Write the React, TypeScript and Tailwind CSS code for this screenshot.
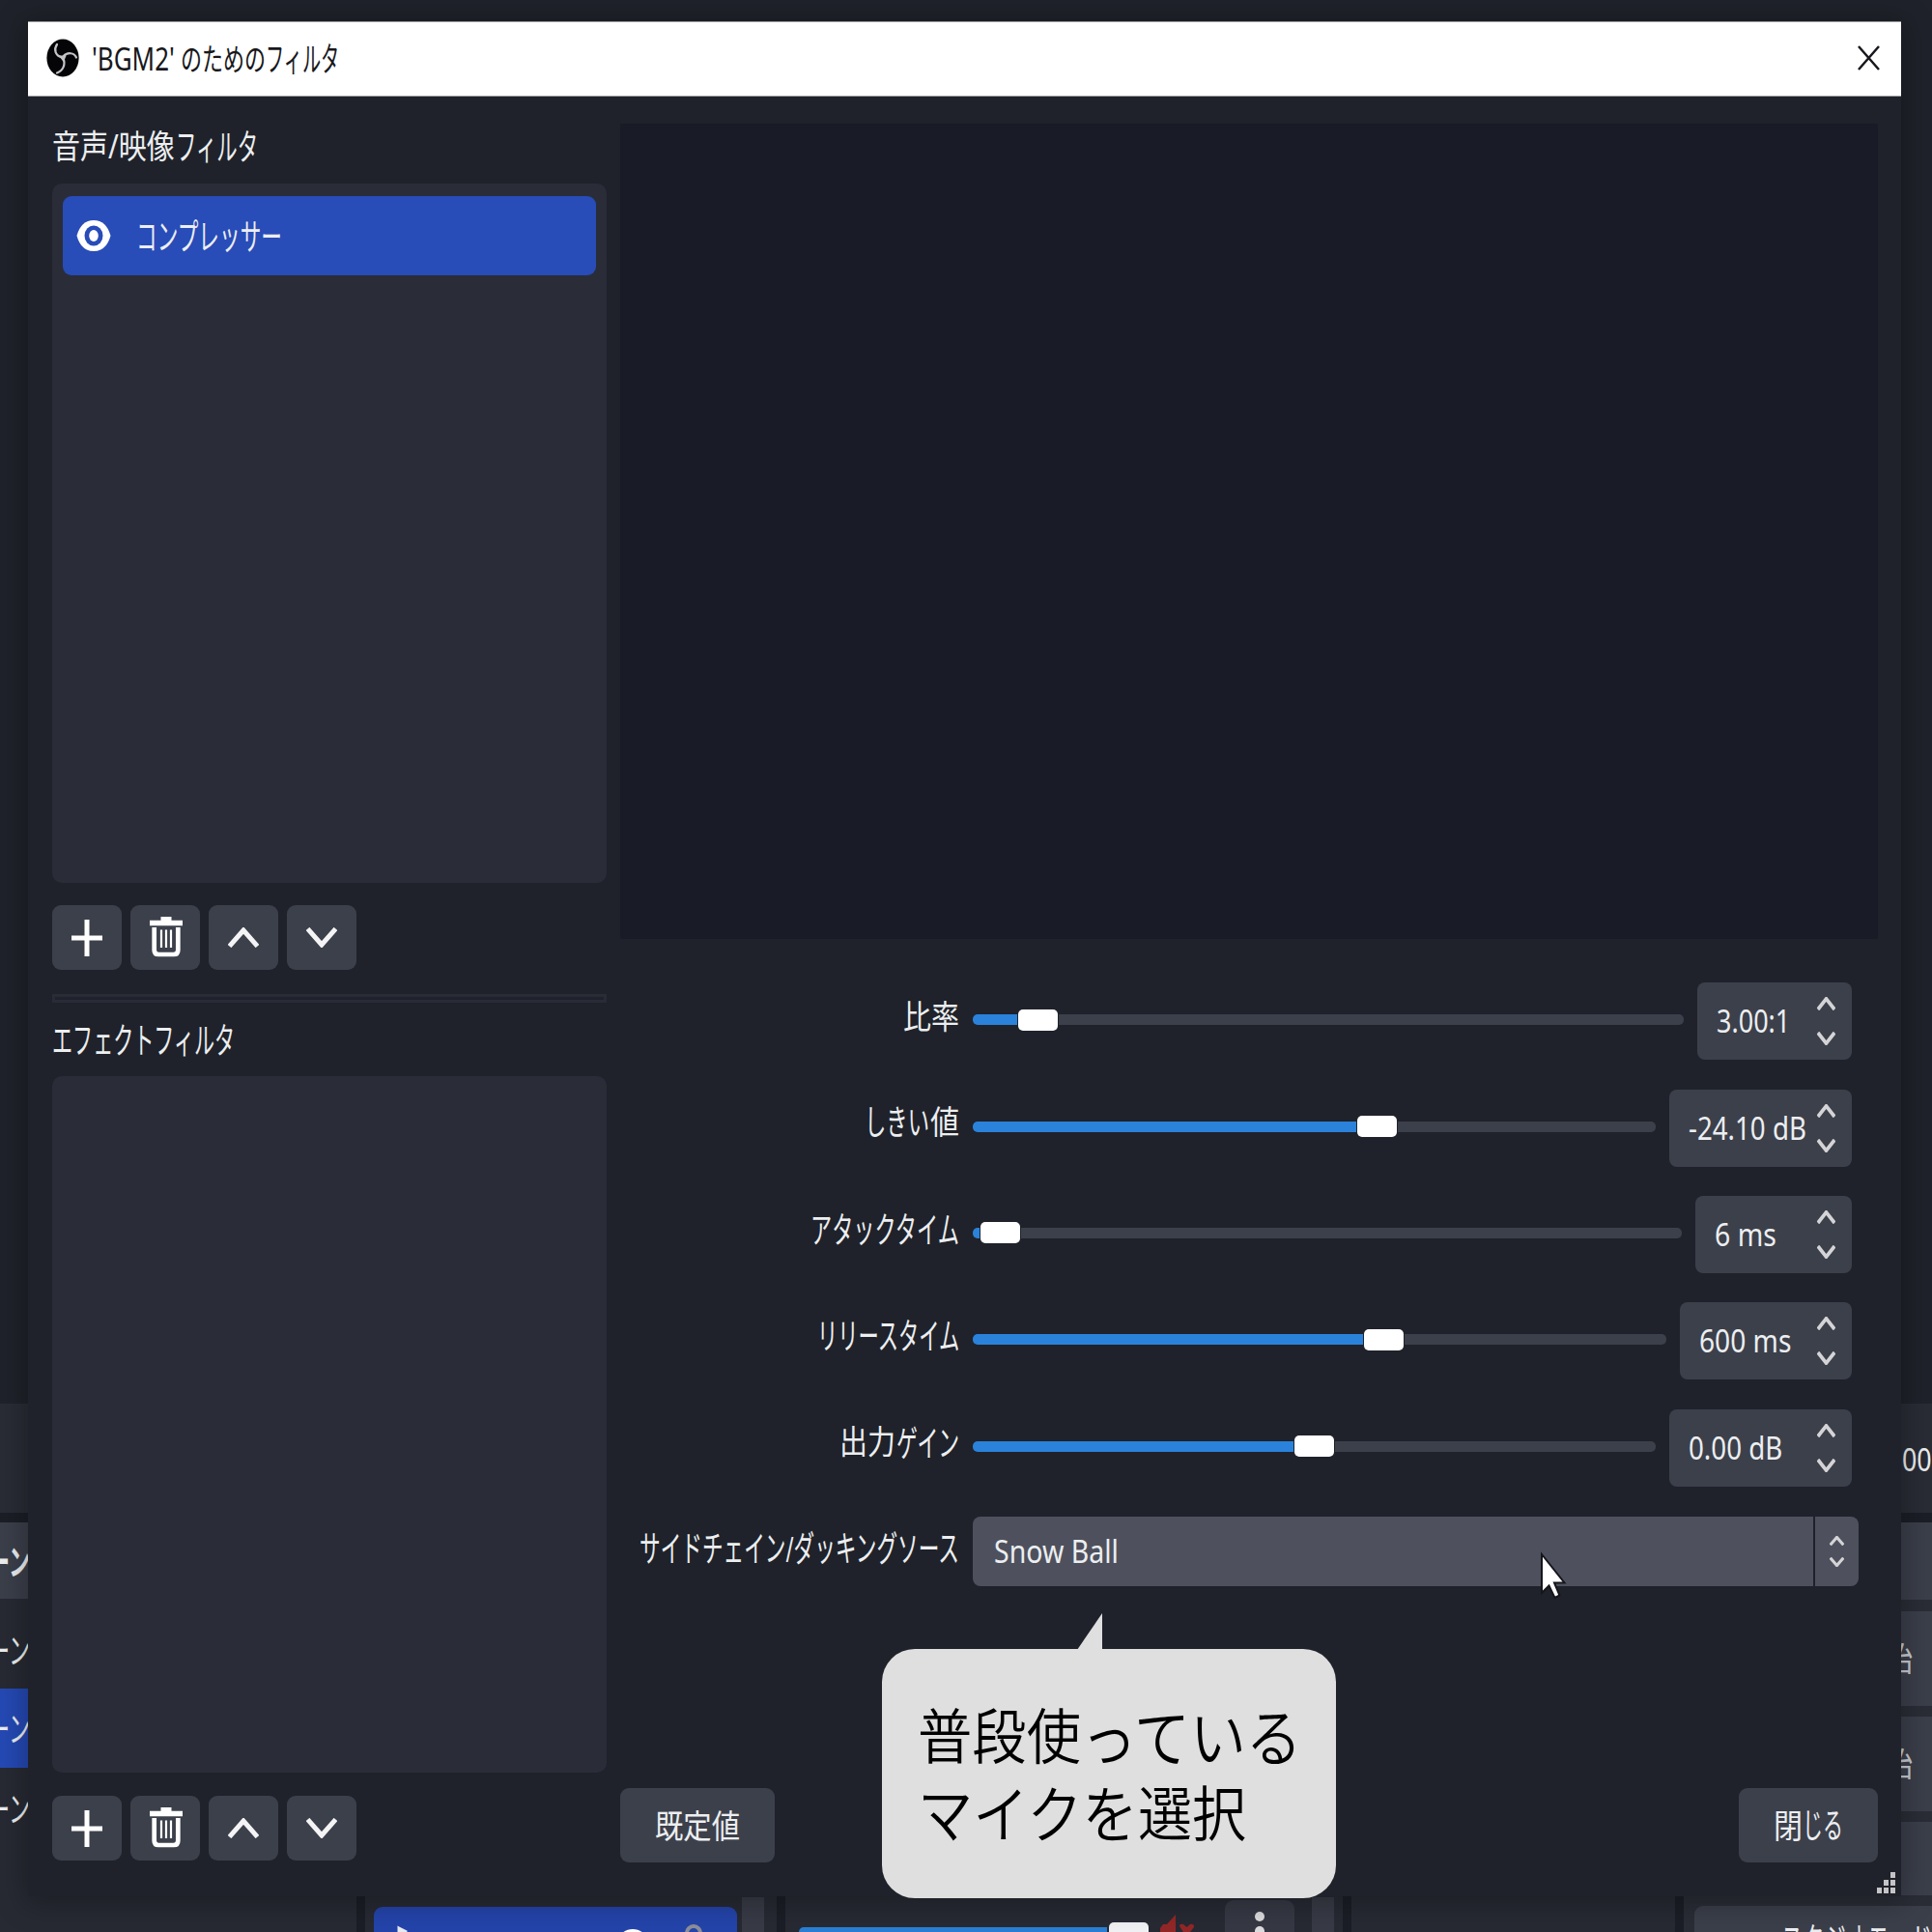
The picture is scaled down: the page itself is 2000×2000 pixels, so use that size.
import { ReactNode, useLayoutEffect, useRef } from 'react';
import clsx from 'clsx';

// Narrow UI text: scales its content horizontally to the width of the box
function Fit({ className, children }: { className: string; children: ReactNode }) {
    const box = useRef<HTMLSpanElement>(null);
    const inner = useRef<HTMLSpanElement>(null);

    useLayoutEffect(() => {
        if (!box.current || !inner.current) return;
        const ratio = box.current.clientWidth / inner.current.offsetWidth;
        inner.current.style.transform = `scaleX(${ratio})`;
    }, []);

    return (
        <span ref={box} className={clsx('block shrink-0 leading-none', className)}>
            <span ref={inner} className="inline-block origin-left whitespace-nowrap align-top">{children}</span>
        </span>
    );
}

const sliders = [
    { label: [['比率', 'w-[58px] text-[34px]']], value: '3.00:1', fill: 47, box: 'w-[160px]', text: 'w-[76px]' },
    { label: [['しきい', 'w-[67px] text-[36px]'], ['値', 'w-[30px] text-[34px]']], value: '-24.10 dB', fill: 398, box: 'w-[189px]', text: 'w-[122px]' },
    { label: [['アタックタイム', 'w-[154px] text-[37px]']], value: '6 ms', fill: 8, box: 'w-[162px]', text: 'w-[64px]' },
    { label: [['リリースタイム', 'w-[147px] text-[37px]']], value: '600 ms', fill: 405, box: 'w-[178px]', text: 'w-[95px]' },
    { label: [['出力', 'w-[58px] text-[34px]'], ['ゲイン', 'w-[65px] text-[37px]']], value: '0.00 dB', fill: 333, box: 'w-[189px]', text: 'w-[97px]' },
];

const scenes = [
    { bg: 'h-[79px] bg-[#3b3f4a] pt-[2px]', weight: 'font-semibold' },
    { bg: 'h-[93px] pt-[14px]', weight: '' },
    { bg: 'h-[82px] bg-[#2549b4]', weight: '' },
    { bg: 'h-[84px]', weight: '' },
];

function ObsLogo() {
    return (
        <svg className="-mt-[2px] h-[40px] w-[34px]" viewBox="0 0 34 40" fill="none">
            <ellipse cx="17" cy="20" rx="16.6" ry="19.6" fill="#050507" />
            <g stroke="#c4c4c8" strokeWidth="2.2" strokeLinecap="round">
                <path d="M11 6C7.500 11 9 17.500 16 19.500" />
                <path d="M31 19.500C29 14.500 21.500 13.500 17.500 18.500" />
                <path d="M17.500 20C20 27 17.500 33 11 35.500" />
                <path d="M15 18.500H19L17.500 22Z" fill="#c4c4c8" />
            </g>
        </svg>
    );
}

function Chevron({ className, down, stroke }: { className: string; down?: boolean; stroke: number }) {
    return (
        <svg className={className} viewBox="0 0 32 21" fill="none" preserveAspectRatio="none">
            <path d={down ? 'M1.500 1.500L16 18L30.500 1.500' : 'M1.500 19.500L16 3L30.500 19.500'} stroke="currentColor" strokeWidth={stroke} />
        </svg>
    );
}

function TrashIcon() {
    return (
        <svg className="ml-[2px] -mt-[1px] h-[42px] w-[34px]" viewBox="0 0 34 42" fill="none" stroke="white">
            <path d="M11.500 2H22.500M0 6.500H34" strokeWidth="5.500" />
            <path d="M4.700 11V34.500Q4.700 39 9 39H25Q29.300 39 29.300 34.500V11" strokeWidth="4.700" />
            <path d="M12 13.500V32M17 13.500V32M22 13.500V32" strokeWidth="2.200" />
        </svg>
    );
}

function Toolbar() {
    const button = 'flex h-[67px] w-[72px] items-center justify-center rounded-[9px] bg-[#3c404b] text-[#f4f4f5]';
    return (
        <div className="flex gap-[9px]">
            <button className={button}>
                <svg className="h-[38px] w-8" viewBox="0 0 32 38" stroke="white" strokeWidth="5">
                    <path d="M16 0V38M0 19H32" />
                </svg>
            </button>
            <button className={button}><TrashIcon /></button>
            <button className={button}><Chevron className="h-[21px] w-8" stroke={5} /></button>
            <button className={button}><Chevron className="h-[21px] w-8" stroke={5} down /></button>
        </div>
    );
}

function SliderRow({ item }: { item: (typeof sliders)[number] }) {
    return (
        <div className="flex h-[110.4px] items-center gap-[14px]">
            <div className="flex w-[351px] justify-end gap-[1px] pb-[11px]">
                {item.label.map(([text, size]) => <Fit key={text} className={size}>{text}</Fit>)}
            </div>
            <div className="flex flex-1 items-center pb-[3px]">
                <div className="h-[11px] rounded-l-[5px] bg-[#2a82da]" style={{ width: item.fill - 1 }} />
                <div className="mx-[1px] h-[22px] w-[41px] rounded-[5px] bg-white" />
                <div className="h-[11px] flex-1 rounded-r-[5px] bg-[#3c404b]" />
            </div>
            <div className={clsx('flex h-20 items-center justify-between rounded-[8px] bg-[#3c404b] pr-[17px] pl-5', item.box)}>
                <Fit className={clsx('text-[32px]', item.text)}>{item.value}</Fit>
                <div className="-ml-2 flex flex-col gap-[22px] text-[#d4d4d6]">
                    <Chevron className="h-[14px] w-[19px]" stroke={6} />
                    <Chevron className="h-[14px] w-[19px]" stroke={6} down />
                </div>
            </div>
        </div>
    );
}

// Main window behind the dialog
function MainWindow() {
    return (
        <div className="flex h-full flex-col bg-[#1b1e26]">
            <div className="h-[1453px] bg-[#1f222a]" />
            <div className="flex h-[113px] items-center justify-end bg-[#292c35] pt-[2px]">
                <Fit className="w-[31px] text-[32px]">00</Fit>
            </div>
            <div className="mt-[10px] flex h-[424px] gap-[9px]">
                <div className="w-[369px] bg-[#272a33]">
                    {scenes.map((scene, i) => (
                        <div key={i} className={clsx('flex items-center', scene.bg, scene.weight)}>
                            <Fit className="-ml-[34px] w-[65px] text-[37px]">シーン</Fit>
                        </div>
                    ))}
                </div>
                <div className="flex w-[426px] items-end bg-[#272a33] pl-[9px]">
                    <div className="flex h-[26px] w-[376px] items-start rounded-t-[9px] bg-[#2444aa]">
                        <svg className="h-[26px] w-[376px]" viewBox="0 0 376 26" fill="none">
                            <path d="M26 22L34 26H26Z" fill="#e8ebf2" stroke="#e8ebf2" strokeWidth="3" />
                            <ellipse cx="268" cy="34" rx="14" ry="11" fill="white" />
                            <path d="M324 30V27A7 7 0 0 1 338 27V30" stroke="#8d8f99" strokeWidth="4" />
                        </svg>
                    </div>
                    <div className="ml-[5px] h-9 w-[23px] bg-[#383b46]" />
                </div>
                <div className="flex w-[577px] items-end bg-[#272a33] pl-[14px]">
                    <div className="h-[5px] w-[319px] rounded-tl-[5px] bg-[#2a7fd4]" />
                    <div className="ml-[2px] h-[10px] w-[41px] rounded-t-[5px] bg-[#f1f1f3]" />
                    <svg className="ml-3 h-[18px] w-[36px]" viewBox="0 0 36 18" fill="#932727">
                        <path d="M0 18V14L3 10H7L16 0V18ZM20 12Q20 9 24 10L27.500 13L31 10Q35 9 35 13L31 18H24Z" />
                    </svg>
                    <div className="ml-[31px] flex h-[33px] w-[72px] flex-col items-center gap-[5px] overflow-hidden rounded-t-[9px] bg-[#363944] pt-[12px]">
                        <span className="size-[10px] shrink-0 rounded-full bg-[#dcdcde]" />
                        <span className="size-[10px] shrink-0 rounded-full bg-[#dcdcde]" />
                    </div>
                    <div className="ml-[18px] h-9 w-[23px] bg-[#383b46]" />
                </div>
                <div className="w-[335px] bg-[#272a33]" />
                <div className="flex flex-1 flex-col overflow-hidden bg-[#2a2d36]">
                    <div className="mb-[12px] h-[80px] shrink-0 bg-[#3b3f4a]" />
                    <div className="flex flex-col gap-[11px] pl-[11px]">
                        <div className="flex h-[98px] items-center bg-[#3b3f4a] pl-[106px] text-[#c9cbd0]"><Fit className="w-[120px] text-[34px]">配信開始</Fit></div>
                        <div className="flex h-[98px] items-center bg-[#3b3f4a] pl-[106px] text-[#c9cbd0]"><Fit className="w-[120px] text-[34px]">録画開始</Fit></div>
                        <div className="h-[76px] bg-[#3b3f4a]" />
                        <div className="flex h-[40px] justify-end rounded-tl-[9px] bg-[#3b3f4a] pt-[17px]"><Fit className="w-[156px] text-[37px]">スタジオモード</Fit></div>
                    </div>
                </div>
            </div>
        </div>
    );
}

export default function App() {
    return (
        <div className="relative h-[2000px] w-[2000px] overflow-hidden font-['Noto_Sans','Noto_Sans_CJK_JP',sans-serif] text-[#eceef0]">
            <MainWindow />

            {/* Filter dialog */}
            <div className="absolute top-[22px] left-[29px] flex h-[1941px] w-[1939px] flex-col bg-[#1f222a] shadow-[0_4px_28px_4px_rgba(0,0,0,0.28)]">
                <div className="flex h-[78px] shrink-0 items-center border-y border-[#9a9a9c] bg-white pr-[22px] pb-[1px] pl-[19px] text-[#18181c]">
                    <ObsLogo />
                    <Fit className="ml-[13px] w-[86px] text-[32px]">'BGM2'</Fit>
                    <Fit className="ml-[6px] w-[88px] text-[32px]">のための</Fit>
                    <Fit className="w-[76px] text-[35px]">フィルタ</Fit>
                    <svg className="-mt-[2px] ml-auto h-[26px] w-[23px]" viewBox="0 0 23 26" stroke="#17171d" strokeWidth="2.500">
                        <path d="M1 1L22 25M22 1L1 25" />
                    </svg>
                </div>

                <div className="flex flex-1 gap-[14px] pr-6 pl-[25px]">
                    <div className="flex w-[574px] shrink-0 flex-col">
                        <div className="flex h-[90px] items-center gap-[1px] pt-3">
                            <Fit className="w-[127px] text-[34px]">音声/映像</Fit>
                            <Fit className="w-[85px] text-[37px]">フィルタ</Fit>
                        </div>
                        <div className="mb-[23px] h-[724px] rounded-[10px] bg-[#2a2d38] px-[11px] pt-[13px]">
                            <div className="flex h-[82px] items-center rounded-[9px] bg-[#284cb8] pl-[14px]">
                                <svg className="h-[34px] w-9" viewBox="0 0 36 34" fill="none">
                                    <path d="M0.500 17Q5 1 18 1T35.500 17Q31 33 18 33T0.500 17Z" fill="white" />
                                    <ellipse cx="18" cy="17" rx="9.500" ry="10.500" fill="#284cb8" />
                                    <ellipse cx="18" cy="17" rx="4.800" ry="6" fill="white" />
                                </svg>
                                <Fit className="ml-[26px] w-[151px] text-[37px]">コンプレッサー</Fit>
                            </div>
                        </div>
                        <Toolbar />
                        <div className="mt-[25px] h-[9px] border-[3px] border-[#292c36]" />
                        <div className="flex h-[76px] items-center">
                            <Fit className="w-[189px] text-[37px]">エフェクトフィルタ</Fit>
                        </div>
                        <div className="mb-6 h-[721px] rounded-[10px] bg-[#2a2d38]" />
                        <Toolbar />
                    </div>

                    <div className="flex flex-1 flex-col pt-7">
                        <div className="mb-[30px] h-[844px] shrink-0 bg-[#191b26]" />
                        <div className="pr-[27px]">
                            {sliders.map((item) => <SliderRow key={item.value} item={item} />)}
                        </div>
                        <div className="mt-[1px] flex h-[102px] items-center gap-[14px] pr-5">
                            <div className="flex w-[351px] justify-end gap-[1px] pb-[6px]">
                                <Fit className="w-[331px] text-[37px]">サイドチェイン/ダッキングソース</Fit>
                            </div>
                            <div className="flex h-[72px] flex-1 gap-[2px]">
                                <div className="flex flex-1 items-center rounded-l-[8px] bg-[#4e515d] pl-[22px]">
                                    <Fit className="w-[129px] text-[32px]">Snow Ball</Fit>
                                </div>
                                <div className="flex w-[45px] flex-col items-center justify-center gap-[12px] rounded-r-[8px] bg-[#4e515d] text-[#d4d4d6]">
                                    <Chevron className="h-[10px] w-[15px]" stroke={6.5} />
                                    <Chevron className="h-[10px] w-[15px]" stroke={6.5} down />
                                </div>
                            </div>
                        </div>
                        <div className="mt-auto mb-[35px] flex justify-between">
                            <button className="flex h-[77px] w-[160px] items-center justify-center rounded-[9px] bg-[#3c404b]">
                                <Fit className="w-[88px] text-[34px]">既定値</Fit>
                            </button>
                            <button className="flex h-[77px] w-[144px] items-center justify-center rounded-[9px] bg-[#3c404b]">
                                <Fit className="w-[30px] text-[34px]">閉</Fit>
                                <Fit className="w-[42px] text-[36px]">じる</Fit>
                            </button>
                        </div>
                    </div>
                </div>

                {/* Resize grip */}
                <svg className="absolute right-[6px] bottom-[3px] h-[22px] w-[19px]" viewBox="0 0 19 22" fill="#c4c4c6">
                    <path d="M14 0h5v6h-5zM7 8h5v6h-5zM14 8h5v6h-5zM0 16h5v6h-5zM7 16h5v6h-5zM14 16h5v6h-5z" />
                </svg>
            </div>

            {/* Callout */}
            <div className="absolute top-[1707px] left-[913px] h-[258px] w-[470px] rounded-[34px] bg-[#dfdfdf] pt-[59px] pl-[37px] font-[350] text-black">
                <svg className="absolute top-[-37px] left-[202px] h-[38px] w-[26px]" viewBox="0 0 26 38" fill="#dfdfdf">
                    <path d="M26 0V38H0Z" />
                </svg>
                <div className="flex h-[80px] items-start">
                    <Fit className="w-[169px] text-[62px]">普段使</Fit>
                    <Fit className="w-[229px] text-[65px]">っている</Fit>
                </div>
                <div className="flex items-start">
                    <Fit className="w-[228px] text-[64px]">マイクを</Fit>
                    <Fit className="w-[112px] text-[62px]">選択</Fit>
                </div>
            </div>

            {/* Mouse pointer */}
            <svg className="absolute top-[1606px] left-[1594px] h-[50px] w-[28px]" viewBox="0 0 28 50" fill="white" stroke="#15161c" strokeWidth="2">
                <path d="M2 3V43L9.500 35.500L15.500 48L20.500 45.500L15 32.500H25.500Z" />
            </svg>
        </div>
    );
}
